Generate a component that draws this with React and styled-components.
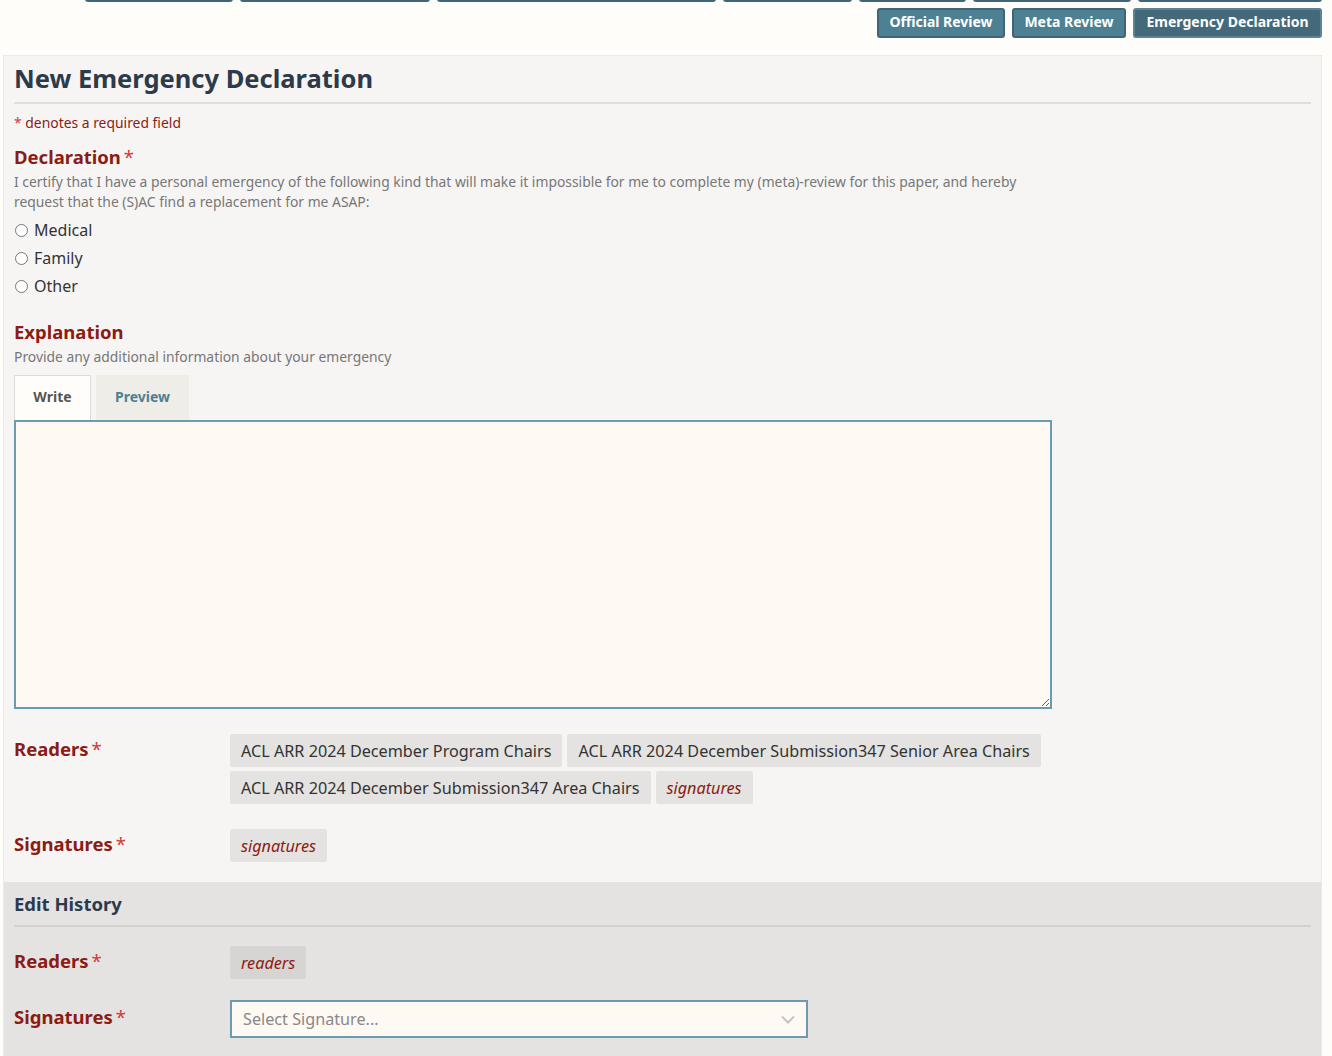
import React from 'react';
import styled, { createGlobalStyle } from 'styled-components';

const GlobalStyle = createGlobalStyle`
    body {
        margin: 0;
        background: #fffdfa;
        font-family: "Noto Sans", "Open Sans", sans-serif;
        color: #333;
        overflow: hidden;
    }
`;

const Page = styled.div`
    height: 1056px;
    overflow: hidden;
`;

// the invitation buttons wrap onto two rows, the first is scrolled out of view
const Toolbar = styled.div`
    display: flex;
    flex-wrap: wrap;
    justify-content: flex-end;
    gap: 6px 7px;
    margin-top: -28px;
    padding-right: 10px;
`;

const InvitationButton = styled.button`
    width: ${props => props.w}px;
    height: 30px;
    box-sizing: border-box;
    background: ${props => props.active ? '#43697a' : '#4e8093'};
    border: 2px solid ${props => props.active ? '#5b8494' : '#3e6676'};
    border-radius: 3px;
    color: #fff;
    font-family: "Noto Sans", sans-serif;
    font-size: 14px;
    font-weight: 700;
    padding: 0 6px 3px;
    white-space: nowrap;
    overflow: hidden;
`;

const Panel = styled.div`
    margin: 17px 10px 0 3px;
    border: 1px solid #ebeae7;
    background: #f6f5f4;
`;

const FormSection = styled.div`
    padding: 0 10px 20px 10px;
`;

const Title = styled.h1`
    margin: 0;
    padding: 5px 0 7px;
    font-size: 25.5px;
    line-height: 34px;
    font-weight: 700;
    color: #2c3a4a;
    border-bottom: 2px solid #dfdedc;
`;

const RequiredNote = styled.p`
    margin: 9px 0 0;
    font-size: 13.9px;
    line-height: 20px;
    color: #8c1b13;
`;

const Star = styled.span`
    color: #d13a35;
    font-weight: 400;
    margin-left: ${props => props.gap || 0}px;
`;

const Field = styled.div`
    margin-top: ${props => props.top}px;
`;

const FieldTitle = styled.div`
    font-size: 18.5px;
    line-height: 24px;
    font-weight: 700;
    color: #8c1b13;
`;

const Description = styled.p`
    margin: 3px 0 0;
    font-size: 13.86px;
    line-height: 20px;
    color: #777;
    max-width: 1020px;
`;

const RadioList = styled.div`
    display: flex;
    flex-direction: column;
    margin-top: 4px;
`;

const RadioLabel = styled.label`
    display: flex;
    align-items: center;
    height: 28px;
    font-size: 16px;
    color: #333;

    input {
        margin: 0 6px 0 1px;
        width: 13px;
        height: 13px;
    }
`;

const Tabs = styled.div`
    display: flex;
    gap: 5px;
    margin-top: 8px;
`;

const Tab = styled.div`
    width: ${props => props.w}px;
    height: 45px;
    box-sizing: border-box;
    display: flex;
    align-items: center;
    justify-content: center;
    padding-bottom: 3px;
    font-size: 14px;
    font-weight: 700;
    background: ${props => props.active ? '#fffdfa' : '#efede8'};
    color: ${props => props.active ? '#555' : '#4e8093'};
    border: 1px solid ${props => props.active ? '#dddcda' : '#efede8'};
    border-bottom: none;
`;

const Editor = styled.textarea`
    display: block;
    width: 1038px;
    height: 289px;
    box-sizing: border-box;
    margin: 0;
    background: #fef9f3;
    border: 2px solid #6a9bae;
    resize: vertical;
    font-family: "Noto Sans", sans-serif;
    font-size: 14px;
    outline: none;
`;

const Row = styled.div`
    display: grid;
    grid-template-columns: 216px 1fr;
    align-items: start;
    margin-top: ${props => props.top}px;
`;

const RowLabel = styled.div`
    font-size: 18.5px;
    line-height: 24px;
    font-weight: 700;
    color: #8c1b13;
    padding-top: ${props => props.pad || 3}px;
`;

const TagList = styled.div`
    display: flex;
    flex-wrap: wrap;
    gap: 4px 5px;
    max-width: 830px;
`;

const Tag = styled.span`
    display: inline-flex;
    align-items: center;
    height: 33px;
    padding: 0 11px;
    border-radius: 2px;
    background: ${props => props.dark ? '#d6d5d3' : '#e4e3e1'};
    font-size: 16.2px;
    color: ${props => props.italic ? '#8c1b13' : '#333'};
    font-style: ${props => props.italic ? 'italic' : 'normal'};
`;

const HistorySection = styled.div`
    background: #e4e3e1;
    padding: 0 10px 40px 10px;
`;

const SubTitle = styled.h2`
    margin: 0;
    padding: 9px 0 9px;
    font-size: 18.5px;
    line-height: 25px;
    font-weight: 700;
    color: #2c3a4a;
    border-bottom: 2px solid #d2d1cf;
`;

const Select = styled.div`
    width: 578px;
    height: 38px;
    box-sizing: border-box;
    display: flex;
    align-items: center;
    justify-content: space-between;
    padding: 0 11px;
    background: #fef9f3;
    border: 2px solid #6a9bae;
    font-size: 16.2px;
    color: #888;
`;

const Chevron = () => (
    <svg width="14" height="9" viewBox="0 0 14 9">
        <path d="M1 1.5 L7 7.5 L13 1.5" fill="none" stroke="#c4c4c4" strokeWidth="2" />
    </svg>
);

const hiddenRow = [
    ['Withdrawal', 148],
    ['Desk Reject Verification', 190],
    ['Author-Editor Confidential Comment', 279],
    ['Comment', 129],
    ['Review Issue', 107],
    ['Ethics Review Flag', 158],
    ['Reviewer Checklist', 184],
];

const App = () => (
    <Page>
        <GlobalStyle />
        <Toolbar>
            {hiddenRow.map(([label, w]) => (
                <InvitationButton key={label} w={w}>{label}</InvitationButton>
            ))}
            <InvitationButton w={128}>Official Review</InvitationButton>
            <InvitationButton w={114}>Meta Review</InvitationButton>
            <InvitationButton w={189} active>Emergency Declaration</InvitationButton>
        </Toolbar>
        <Panel>
            <FormSection>
                <Title>New Emergency Declaration</Title>
                <RequiredNote><Star>*</Star> denotes a required field</RequiredNote>

                <Field top={12}>
                    <FieldTitle>Declaration<Star gap={3}>*</Star></FieldTitle>
                    <Description>
                        I certify that I have a personal emergency of the following kind that will make it impossible for me to complete my (meta)-review for this paper, and hereby request that the (S)AC find a replacement for me ASAP:
                    </Description>
                    <RadioList>
                        <RadioLabel><input type="radio" name="kind" />Medical</RadioLabel>
                        <RadioLabel><input type="radio" name="kind" />Family</RadioLabel>
                        <RadioLabel><input type="radio" name="kind" />Other</RadioLabel>
                    </RadioList>
                </Field>

                <Field top={20}>
                    <FieldTitle>Explanation</FieldTitle>
                    <Description>Provide any additional information about your emergency</Description>
                    <Tabs>
                        <Tab active w={77}>Write</Tab>
                        <Tab w={93}>Preview</Tab>
                    </Tabs>
                    <Editor />
                </Field>

                <Row top={25}>
                    <RowLabel>Readers<Star gap={3}>*</Star></RowLabel>
                    <TagList>
                        <Tag>ACL ARR 2024 December Program Chairs</Tag>
                        <Tag>ACL ARR 2024 December Submission347 Senior Area Chairs</Tag>
                        <Tag>ACL ARR 2024 December Submission347 Area Chairs</Tag>
                        <Tag italic>signatures</Tag>
                    </TagList>
                </Row>

                <Row top={25}>
                    <RowLabel>Signatures<Star gap={3}>*</Star></RowLabel>
                    <TagList>
                        <Tag italic>signatures</Tag>
                    </TagList>
                </Row>
            </FormSection>

            <HistorySection>
                <SubTitle>Edit History</SubTitle>
                <Row top={19}>
                    <RowLabel>Readers<Star gap={3}>*</Star></RowLabel>
                    <TagList>
                        <Tag italic dark>readers</Tag>
                    </TagList>
                </Row>
                <Row top={21}>
                    <RowLabel pad={5}>Signatures<Star gap={3}>*</Star></RowLabel>
                    <Select>
                        <span>Select Signature...</span>
                        <Chevron />
                    </Select>
                </Row>
            </HistorySection>
        </Panel>
    </Page>
);

export default App;
